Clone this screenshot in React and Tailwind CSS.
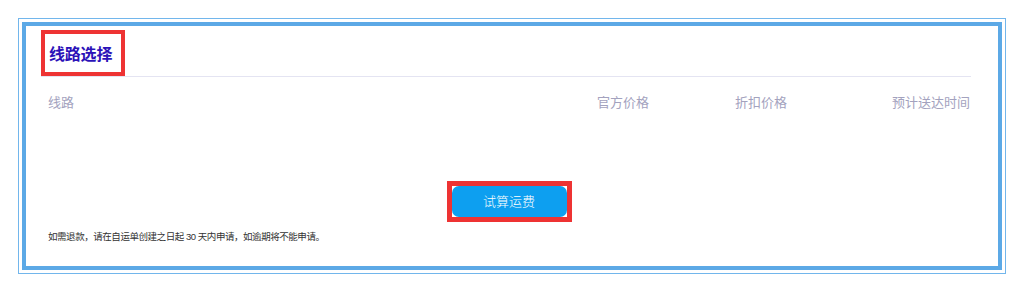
import React from 'react';

const App = () => {
  const cols = ['官方价格', '折扣价格', '预计送达时间'];
  return (
    <div
      className="w-[1024px] h-[292px] bg-white pt-[18px] pl-[18px]"
      style={{ fontFamily: '"Liberation Sans", "Noto Sans CJK SC", sans-serif' }}
    >
      <div className="w-[988px] h-[256px] border border-[#72b6ec] p-[3px]">
        <div className="h-full border-4 border-[#5ca9e6] pl-[15px] pr-[27px] pt-[4px]">
          {/* title */}
          <div className="border-b border-[#e4e4f2]">
            <div className="inline-flex items-center h-[46px] w-[84px] border-4 border-[#ee3333] pl-[4px] pt-[3px]">
              <span className="text-[16px] font-bold text-[#2b12b8] tracking-[-0.2px]">线路选择</span>
            </div>
          </div>

          {/* table head */}
          <div className="flex mt-[16px] text-[13px] leading-[20px] text-[#a3a2be]">
            <div className="w-[556px] pl-[7px]">线路</div>
            <div className="w-[138px]">{cols[0]}</div>
            <div className="w-[235px] flex justify-between">
              <span>{cols[1]}</span>
              <span>{cols[2]}</span>
            </div>
          </div>

          {/* action */}
          <div className="flex justify-center pl-[6px] mt-[68px]">
            <div className="border-[5px] border-[#ee3333]">
              <button className="w-[115px] h-[31px] rounded-[7px] bg-[#0d9ff0] text-white text-[13px] font-light flex items-center justify-center">
                试算运费
              </button>
            </div>
          </div>

          <p className="mt-[8px] pl-[7px] text-[9.5px] leading-[14px] tracking-[-0.45px] text-[#333]">
            如需退款，请在自运单创建之日起 30 天内申请，如逾期将不能申请。
          </p>
        </div>
      </div>
    </div>
  );
};

export default App;
